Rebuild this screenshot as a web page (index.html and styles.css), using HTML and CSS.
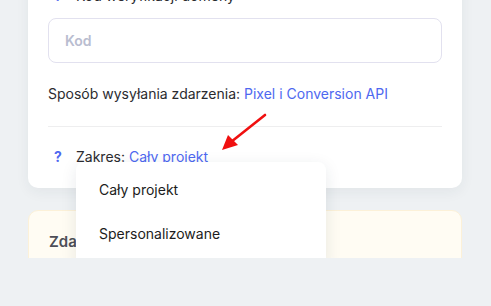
FILE: index.html
```html
<!DOCTYPE html>
<html lang="pl">
<head>
    <meta charset="UTF-8">
    <meta name="viewport" content="width=device-width, initial-scale=1.0">
    <title>Ustawienia zdarzeń</title>
    <link rel="stylesheet" href="styles.css">
</head>
<body>
    <div class="viewport">
        <div class="content">
            <div class="card">
                <div class="row">
                    <span class="help">?</span>
                    <span>Kod weryfikacji domeny</span>
                </div>
                <input class="field" type="text" placeholder="Kod">
                <div class="line">
                    Sposób wysyłania zdarzenia: <a class="link">Pixel i Conversion API</a>
                </div>
                <hr class="divider">
                <div class="row">
                    <span class="help">?</span>
                    <span>Zakres: <a class="link">Cały projekt</a></span>
                </div>

                <div class="dropdown">
                    <div class="option">Cały projekt</div>
                    <div class="option">Spersonalizowane</div>
                </div>

                <svg class="arrow" width="60" height="50" viewBox="0 0 60 50">
                    <line x1="48" y1="4" x2="14" y2="31" stroke="#f01010" stroke-width="2.6" stroke-linecap="round"/>
                    <polygon points="5,39 11,24 21,34" fill="#f01010"/>
                </svg>
            </div>

            <div class="card notice">
                <h3 class="notice-title">Zdarzenia</h3>
            </div>
        </div>
    </div>
</body>
</html>
```

FILE: styles.css
```css
* {
    box-sizing: border-box;
}
html, body {
    margin: 0;
    padding: 0;
}
body {
    font-family: Inter, "Noto Sans", sans-serif;
    font-size: 14px;
    color: #2b2b2f;
    background-color: #eef1f3;
    width: 491px;
    height: 306px;
    overflow: hidden;
}
.viewport {
    height: 258px;
    overflow: hidden;
}
.content {
    margin-top: -34px;
    padding: 0 29px 0 28px;
}
.card {
    position: relative;
    background-color: #ffffff;
    border-radius: 10px;
    padding: 20px 20px 21px;
    box-shadow: 0 4px 14px rgba(30, 45, 70, 0.06);
}
.row {
    display: flex;
    align-items: center;
    height: 20px;
    line-height: 20px;
}
.help {
    width: 28px;
    padding-left: 6px;
    color: #4e68f0;
    font-weight: 700;
}
.field {
    display: block;
    width: 100%;
    height: 45px;
    margin-top: 12px;
    padding: 0 16px;
    border: 1px solid #e2e1ef;
    border-radius: 8px;
    font-family: inherit;
    font-size: 14px;
    font-weight: 600;
    outline: none;
}
.field::placeholder {
    color: #b9bdd0;
}
.line {
    margin-top: 21px;
    line-height: 20px;
}
.link {
    color: #4e68f0;
}
.divider {
    border: none;
    border-top: 1px solid #eeeeef;
    margin: 22px 0 20px;
}
.dropdown {
    position: absolute;
    left: 48px;
    top: 196px;
    width: 250px;
    padding: 6px 0 12px;
    background-color: #ffffff;
    border-radius: 8px;
    box-shadow: 0 4px 16px rgba(30, 45, 70, 0.1);
    z-index: 2;
}
.option {
    height: 44px;
    line-height: 44px;
    padding-left: 23px;
    color: #1c1c20;
}
.arrow {
    position: absolute;
    left: 189px;
    top: 145px;
    z-index: 3;
}
.notice {
    margin-top: 22px;
    height: 80px;
    background-color: #fffcf3;
    border: 1px solid #fcf1d8;
    box-shadow: none;
}
.notice-title {
    margin: 0;
    padding-top: 1px;
    font-size: 15px;
    font-weight: 600;
    color: #4d4e57;
}
```
